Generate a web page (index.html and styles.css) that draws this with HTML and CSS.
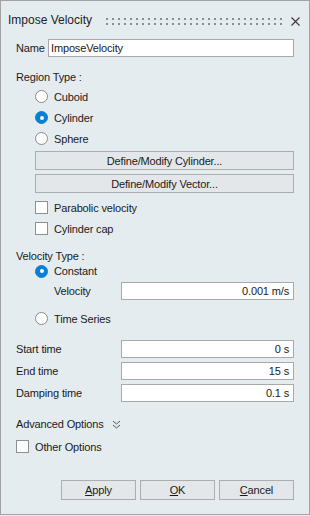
FILE: index.html
```html
<!DOCTYPE html>
<html>
<head>
<meta charset="utf-8">
<link rel="stylesheet" href="styles.css">
</head>
<body>
<div class="dialog">
  <div class="titlebar">
    <span class="title">Impose Velocity</span>
    <div class="grip"><div class="dots"></div><div class="dots"></div></div>
    <svg class="close" width="9" height="9" viewBox="0 0 9 9"><path d="M0.5 0.5 L8.5 8.5 M8.5 0.5 L0.5 8.5" stroke="#3a3a3a" stroke-width="1.1" fill="none"/></svg>
  </div>
  <div class="content">
    <div class="row name-row">
      <span class="name-label">Name</span>
      <div class="input left">ImposeVelocity</div>
    </div>
    <div class="section-label region-label">Region Type :</div>
    <div class="indent radios">
      <div class="opt"><span class="radio"></span><span>Cuboid</span></div>
      <div class="opt"><span class="radio on"></span><span>Cylinder</span></div>
      <div class="opt"><span class="radio"></span><span>Sphere</span></div>
    </div>
    <div class="indent btns">
      <div class="btn wide">Define/Modify Cylinder...</div>
      <div class="btn wide">Define/Modify Vector...</div>
    </div>
    <div class="indent checks">
      <div class="opt"><span class="check"></span><span>Parabolic velocity</span></div>
      <div class="opt"><span class="check"></span><span>Cylinder cap</span></div>
    </div>
    <div class="section-label vel-label">Velocity Type :</div>
    <div class="indent">
      <div class="opt const"><span class="radio on"></span><span>Constant</span></div>
      <div class="row vel-row">
        <span class="vel-text">Velocity</span>
        <div class="input right">0.001 m/s</div>
      </div>
      <div class="opt ts"><span class="radio"></span><span>Time Series</span></div>
    </div>
    <div class="times">
      <div class="row"><span class="time-label">Start time</span><div class="input right">0 s</div></div>
      <div class="row"><span class="time-label">End time</span><div class="input right">15 s</div></div>
      <div class="row"><span class="time-label">Damping time</span><div class="input right">0.1 s</div></div>
    </div>
    <div class="adv">
      <span>Advanced Options</span>
      <svg class="chev" width="9" height="9" viewBox="0 0 9 9"><path d="M1 1 L4.5 4 L8 1 M1 5 L4.5 8 L8 5" stroke="#555" stroke-width="1" fill="none"/></svg>
    </div>
    <div class="opt other"><span class="check"></span><span>Other Options</span></div>
    <div class="footer">
      <div class="btn fbtn"><span><u>A</u>pply</span></div>
      <div class="btn fbtn"><span><u>O</u>K</span></div>
      <div class="btn fbtn"><span><u>C</u>ancel</span></div>
    </div>
  </div>
</div>
</body>
</html>
```
FILE: styles.css
```css
* { box-sizing: border-box; }
html, body { margin: 0; padding: 0; background: #e8eef2; }
body {
  font-family: "Liberation Sans", Arial, sans-serif;
  font-size: 11px;
  letter-spacing: -0.15px;
  color: #1a1a1a;
}
.dialog {
  width: 310px;
  height: 515px;
  border: 1px solid #a2a2a2;
  background: #e5ecf0;
}
.titlebar {
  height: 38px;
  display: flex;
  align-items: center;
  padding-left: 7px;
}
.title {
  font-size: 12px;
  letter-spacing: 0;
  color: #222;
}
.grip {
  margin-left: 14px;
  width: 176px;
  display: flex;
  flex-direction: column;
  gap: 3px;
  margin-top: 2px;
}
.dots {
  height: 2px;
  background: repeating-linear-gradient(to right, #8c8c8c 0 2px, transparent 2px 6px);
}
.close { margin-left: 9px; margin-top: 2px; }
.content {
  padding: 0 15px 0 15px;
}
.row {
  display: flex;
  align-items: center;
  height: 18px;
}
.input {
  height: 18px;
  flex: 1;
  background: #fff;
  border: 1px solid #a9a9a9;
  display: flex;
  align-items: center;
  line-height: 16px;
  white-space: nowrap;
}
.input.left { padding-left: 2px; }
.input.right { justify-content: flex-end; padding-right: 4px; }
.name-label { width: 32px; }
.section-label { height: 14px; line-height: 14px; }
.region-label { margin-top: 13px; }
.indent { margin-left: 19px; }
.radios { margin-top: 2px; }
.opt {
  display: flex;
  align-items: center;
  height: 21px;
  gap: 6px;
}
.radio {
  width: 13px;
  height: 13px;
  border-radius: 50%;
  border: 1px solid #8a8a8a;
  background: #fff;
  flex: none;
  position: relative;
}
.radio.on {
  border-color: #0b7fd4;
  background: #0b7fd4;
}
.radio.on::after {
  content: "";
  position: absolute;
  left: 3.5px;
  top: 3.5px;
  width: 4px;
  height: 4px;
  border-radius: 50%;
  background: #fff;
}
.check {
  width: 13px;
  height: 13px;
  border: 1px solid #8f8f8f;
  background: #fff;
  flex: none;
}
.btns {
  margin-top: 2px;
  display: flex;
  flex-direction: column;
  gap: 4px;
}
.btn {
  height: 19px;
  background: #e4e7e9;
  border: 1px solid #adadad;
  display: flex;
  align-items: center;
  justify-content: center;
}
.checks { margin-top: 4px; }
.vel-label { margin-top: 10px; }
.const { height: 16px; }
.vel-row { margin-top: 3px; margin-left: 19px; }
.vel-text { width: 67px; }
.ts { margin-top: 8px; }
.times {
  margin-top: 11px;
  display: flex;
  flex-direction: column;
  gap: 4px;
}
.time-label { width: 105px; }
.adv {
  margin-top: 15px;
  height: 14px;
  display: flex;
  align-items: center;
  gap: 8px;
}
.chev { margin-top: 1px; }
.other {
  margin-top: 9px;
  height: 13px;
  gap: 6px;
}
.footer {
  margin-top: 27px;
  display: flex;
  justify-content: flex-end;
  gap: 4px;
}
.fbtn {
  width: 75px;
  height: 20px;
}
.fbtn u { text-decoration: underline; text-underline-offset: 1px; }
```
